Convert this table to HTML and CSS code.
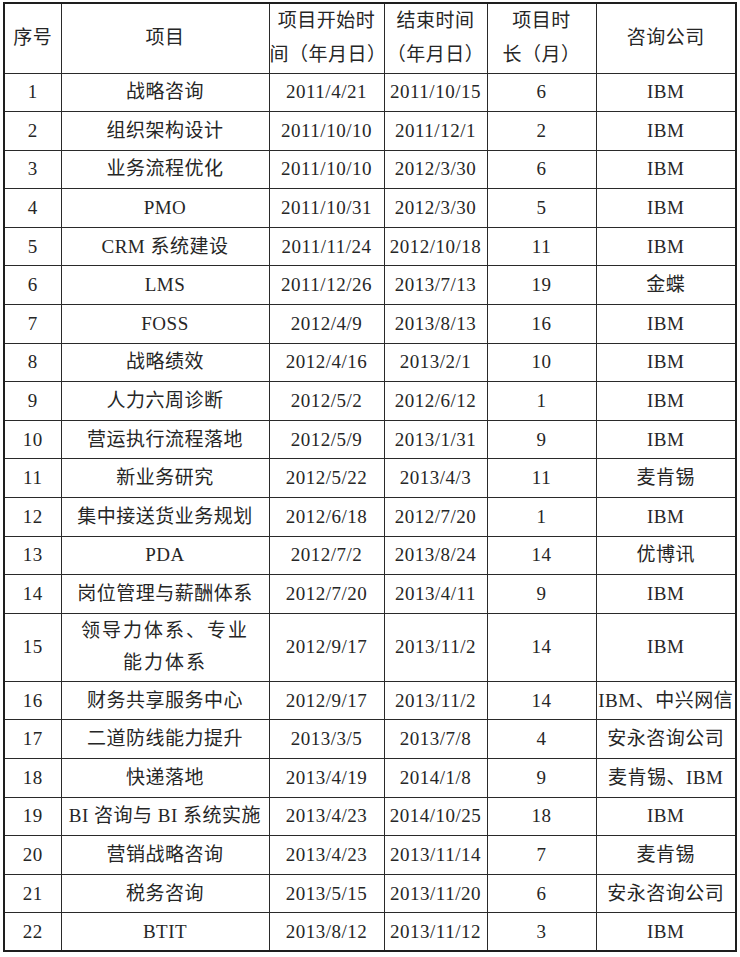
FILE: index.html
```html
<!DOCTYPE html>
<html lang="zh-CN">
<head>
<meta charset="utf-8">
<link rel="stylesheet" href="styles.css">
</head>
<body>
<table class="grid">
  <colgroup>
    <col class="c-no"><col class="c-item"><col class="c-start"><col class="c-end"><col class="c-dur"><col class="c-co">
  </colgroup>
  <thead>
    <tr class="head">
      <th>序号</th>
      <th>项目</th>
      <th class="two">项目开始时<br>间（年月日）</th>
      <th class="two">结束时间<br>（年月日）</th>
      <th class="two">项目时<br>长（月）</th>
      <th>咨询公司</th>
    </tr>
  </thead>
  <tbody>
    <tr><td>1</td><td>战略咨询</td><td>2011/4/21</td><td>2011/10/15</td><td>6</td><td>IBM</td></tr>
    <tr><td>2</td><td>组织架构设计</td><td>2011/10/10</td><td>2011/12/1</td><td>2</td><td>IBM</td></tr>
    <tr><td>3</td><td>业务流程优化</td><td>2011/10/10</td><td>2012/3/30</td><td>6</td><td>IBM</td></tr>
    <tr><td>4</td><td>PMO</td><td>2011/10/31</td><td>2012/3/30</td><td>5</td><td>IBM</td></tr>
    <tr><td>5</td><td>CRM 系统建设</td><td>2011/11/24</td><td>2012/10/18</td><td>11</td><td>IBM</td></tr>
    <tr><td>6</td><td>LMS</td><td>2011/12/26</td><td>2013/7/13</td><td>19</td><td>金蝶</td></tr>
    <tr><td>7</td><td>FOSS</td><td>2012/4/9</td><td>2013/8/13</td><td>16</td><td>IBM</td></tr>
    <tr><td>8</td><td>战略绩效</td><td>2012/4/16</td><td>2013/2/1</td><td>10</td><td>IBM</td></tr>
    <tr><td>9</td><td>人力六周诊断</td><td>2012/5/2</td><td>2012/6/12</td><td>1</td><td>IBM</td></tr>
    <tr><td>10</td><td>营运执行流程落地</td><td>2012/5/9</td><td>2013/1/31</td><td>9</td><td>IBM</td></tr>
    <tr><td>11</td><td>新业务研究</td><td>2012/5/22</td><td>2013/4/3</td><td>11</td><td>麦肯锡</td></tr>
    <tr><td>12</td><td>集中接送货业务规划</td><td>2012/6/18</td><td>2012/7/20</td><td>1</td><td>IBM</td></tr>
    <tr><td>13</td><td>PDA</td><td>2012/7/2</td><td>2013/8/24</td><td>14</td><td>优博讯</td></tr>
    <tr><td>14</td><td>岗位管理与薪酬体系</td><td>2012/7/20</td><td>2013/4/11</td><td>9</td><td>IBM</td></tr>
    <tr class="tall"><td>15</td><td class="two">领导力体系、专业<br>能力体系</td><td>2012/9/17</td><td>2013/11/2</td><td>14</td><td>IBM</td></tr>
    <tr><td>16</td><td>财务共享服务中心</td><td>2012/9/17</td><td>2013/11/2</td><td>14</td><td>IBM、中兴网信</td></tr>
    <tr><td>17</td><td>二道防线能力提升</td><td>2013/3/5</td><td>2013/7/8</td><td>4</td><td>安永咨询公司</td></tr>
    <tr><td>18</td><td>快递落地</td><td>2013/4/19</td><td>2014/1/8</td><td>9</td><td>麦肯锡、IBM</td></tr>
    <tr><td>19</td><td>BI 咨询与 BI 系统实施</td><td>2013/4/23</td><td>2014/10/25</td><td>18</td><td>IBM</td></tr>
    <tr><td>20</td><td>营销战略咨询</td><td>2013/4/23</td><td>2013/11/14</td><td>7</td><td>麦肯锡</td></tr>
    <tr><td>21</td><td>税务咨询</td><td>2013/5/15</td><td>2013/11/20</td><td>6</td><td>安永咨询公司</td></tr>
    <tr><td>22</td><td>BTIT</td><td>2013/8/12</td><td>2013/11/12</td><td>3</td><td>IBM</td></tr>
  </tbody>
</table>
</body>
</html>
```

FILE: styles.css
```css
html, body {
  margin: 0;
  padding: 0;
  background: #ffffff;
}

body {
  padding: 2px 0 0 3px;
  font-family: "Liberation Serif", "Noto Sans CJK SC", serif;
  color: #262626;
}

.grid {
  border-collapse: collapse;
  table-layout: fixed;
  width: 732px;
  border: 2px solid #1e1e1e;
}

.c-no { width: 57px; }
.c-item { width: 208px; }
.c-start { width: 115px; }
.c-end { width: 103px; }
.c-dur { width: 109px; }
.c-co { width: 140px; }

.grid th,
.grid td {
  border: 1.5px solid #2a2a2a;
  text-align: center;
  vertical-align: middle;
  padding: 0;
  font-size: 19px;
  font-weight: normal;
  line-height: 22px;
  white-space: nowrap;
  letter-spacing: 0.5px;
}

.grid tbody tr {
  height: 38.6px;
}

.grid .head {
  height: 70px;
}

.grid th.two {
  line-height: 34px;
}

.grid tr.tall {
  height: 68px;
}

.grid td.two {
  line-height: 32px;
  letter-spacing: 2px;
}
```
